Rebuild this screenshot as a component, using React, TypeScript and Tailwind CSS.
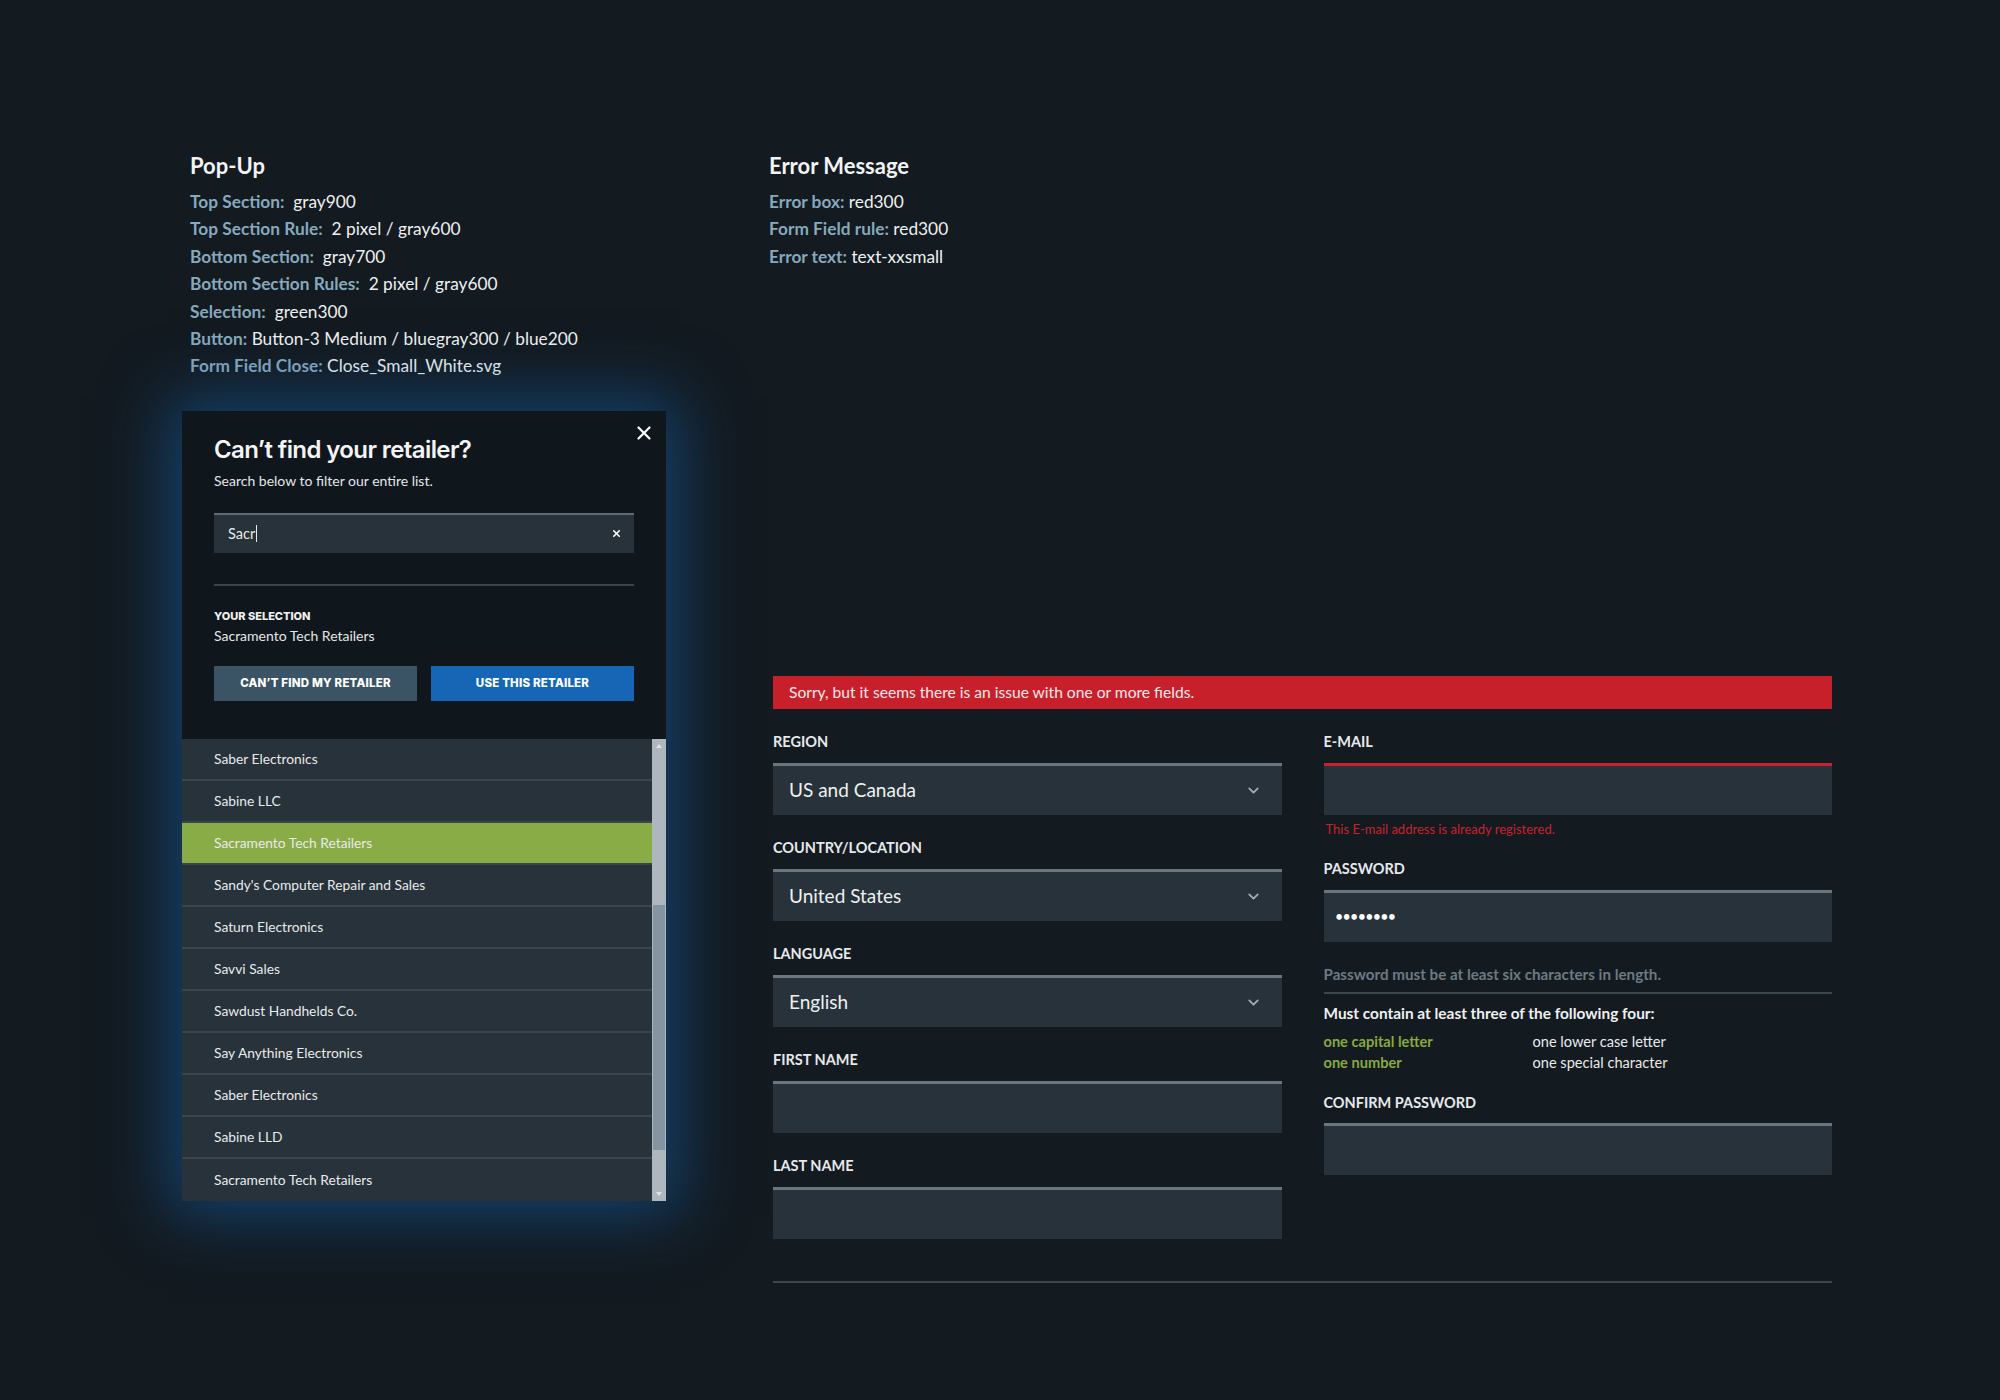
import React from 'react';
import { X, ChevronDown } from 'lucide-react';

const specs = [
  ['Top Section:', 'gray900', true],
  ['Top Section Rule:', '2 pixel / gray600', true],
  ['Bottom Section:', 'gray700', true],
  ['Bottom Section Rules:', '2 pixel / gray600', true],
  ['Selection:', 'green300', true],
  ['Button:', 'Button-3 Medium / bluegray300 / blue200', false],
  ['Form Field Close:', 'Close_Small_White.svg', false],
] as const;

const errorSpecs = [
  ['Error box:', 'red300'],
  ['Form Field rule:', 'red300'],
  ['Error text:', 'text-xxsmall'],
];

const retailers = [
  'Saber Electronics',
  'Sabine LLC',
  'Sacramento Tech Retailers',
  "Sandy's Computer Repair and Sales",
  'Saturn Electronics',
  'Savvi Sales',
  'Sawdust Handhelds Co.',
  'Say Anything Electronics',
  'Saber Electronics',
  'Sabine LLD',
  'Sacramento Tech Retailers',
];

function SpecList({ title, items }: { title: string; items: readonly (readonly [string, string, ...unknown[]])[] }) {
  return (
    <div>
      <h2 className="text-[22px] leading-[28px] font-bold text-[#f1f3f4]">{title}</h2>
      <ul className="mt-[8px]">
        {items.map(([label, value, gap]) => (
          <li key={label} className="text-[17.3px] leading-[27.4px] text-[#eef0f1]">
            <span className="font-bold text-[#86a9be]">{label}</span>
            {gap ? '\u00a0 ' : ' '}
            {value}
          </li>
        ))}
      </ul>
    </div>
  );
}

function Popup() {
  return (
    <div className="relative mt-[31px] -ml-[8px] w-[484px] shadow-[0_0_60px_14px_rgba(22,92,158,0.6)]">
      <div className="bg-[#10171c] px-[32px] pt-[24px] pb-[38px]" style={{ fontFamily: 'Inter, "Noto Sans", sans-serif' }}>
        <button className="absolute top-[11px] right-[11px] text-white">
          <X size={22} strokeWidth={2.4} />
        </button>
        <h3 className="text-[24px] leading-[30px] font-semibold tracking-[-0.6px] text-[#f3f4f5]">Can’t find your retailer?</h3>
        <p className="mt-[7px] text-[14px] leading-[18px] text-[#e3e6e8]" style={{ fontFamily: 'Lato, sans-serif' }}>
          Search below to filter our entire list.
        </p>
        <div className="mt-[23px] h-[40px] bg-[#27323a] border-t-2 border-[#5d6a73] flex items-center justify-between pl-[14px] pr-[12px]">
          <span className="flex items-center text-[14.5px] text-[#e8eaeb]" style={{ fontFamily: 'Lato, sans-serif' }}>
            Sacr<span className="ml-[1px] inline-block w-px h-[17px] bg-[#e8eaeb]" />
          </span>
          <X size={11} strokeWidth={3.5} className="text-white" />
        </div>
        <div className="mt-[31px] h-[2px] bg-[#38444c]" />
        <div className="mt-[23px] text-[11px] leading-[14px] font-extrabold uppercase text-[#eef0f1]">Your Selection</div>
        <div className="mt-[4px] text-[14px] leading-[18px] text-[#e3e6e8]" style={{ fontFamily: 'Lato, sans-serif' }}>
          Sacramento Tech Retailers
        </div>
        <div className="mt-[21px] grid grid-cols-2 gap-[14px]">
          <button className="h-[35px] bg-[#3a5365] text-white text-[11.5px] font-extrabold uppercase tracking-[0.2px]">Can’t find my retailer</button>
          <button className="h-[35px] bg-[#1766b5] text-white text-[11.5px] font-extrabold uppercase tracking-[0.2px]">Use this retailer</button>
        </div>
      </div>
      <div className="flex bg-[#27323a]" style={{ fontFamily: 'Lato, sans-serif' }}>
        <ul className="flex-1">
          {retailers.map((r, i) => (
            <li
              key={i}
              className={`h-[42px] flex items-center pl-[32px] text-[13.8px] text-[#e8eaeb] ${i < retailers.length - 1 ? 'border-b-2 border-[#3a464e]' : ''} ${i === 2 ? 'bg-[#8aac46]' : ''}`}
            >
              {r}
            </li>
          ))}
        </ul>
        <div className="w-[14px] flex flex-col bg-[#aeb7be]">
          <div className="h-[14px] flex items-center justify-center">
            <div className="w-0 h-0 border-l-[3px] border-r-[3px] border-b-[4px] border-l-transparent border-r-transparent border-b-[#dfe3e6]" />
          </div>
          <div className="h-[152px]" />
          <div className="h-[245px] mx-[1px] bg-[#8494a0]" />
          <div className="flex-1" />
          <div className="h-[14px] flex items-center justify-center">
            <div className="w-0 h-0 border-l-[3px] border-r-[3px] border-t-[4px] border-l-transparent border-r-transparent border-t-[#dfe3e6]" />
          </div>
        </div>
      </div>
    </div>
  );
}

function Label({ children }: { children: React.ReactNode }) {
  return <div className="text-[14.5px] leading-[18px] font-bold uppercase text-[#e6e9eb]">{children}</div>;
}

function Field({ label, value, select, error }: { label: string; value?: string; select?: boolean; error?: boolean }) {
  return (
    <div>
      <Label>{label}</Label>
      <div
        className={`mt-[12px] h-[52px] bg-[#27323a] border-t-[3px] flex items-center justify-between pl-[16px] pr-[20px] ${error ? 'border-[#c8232c]' : 'border-[#6a767e]'}`}
      >
        <span className="text-[19px] text-[#eef0f1]">{value}</span>
        {select && <ChevronDown size={17} strokeWidth={2.6} className="text-[#a3acb2]" />}
      </div>
    </div>
  );
}

function ErrorForm() {
  return (
    <div className="mt-[406px] ml-[4px] w-[1059px]">
      <div className="h-[33px] bg-[#c8202a] flex items-center pl-[16px] text-[15.6px] text-[#f6e9ea]">
        Sorry, but it seems there is an issue with one or more fields.
      </div>
      <div className="mt-[24px] grid grid-cols-2 gap-x-[42px] items-start">
        <div className="flex flex-col gap-[24px]">
          <Field label="Region" value="US and Canada" select />
          <Field label="Country/Location" value="United States" select />
          <Field label="Language" value="English" select />
          <Field label="First Name" />
          <Field label="Last Name" />
        </div>
        <div>
          <Field label="E-mail" error />
          <div className="mt-[6px] pl-[2px] text-[13px] leading-[16px] text-[#c8232c]">This E-mail address is already registered.</div>
          <div className="mt-[23px]">
            <Label>Password</Label>
            <div className="mt-[12px] h-[52px] bg-[#27323a] border-t-[3px] border-[#6a767e] flex items-center pl-[12px]">
              <span className="text-[12.5px] font-bold tracking-[0.3px] text-white">••••••••</span>
            </div>
          </div>
          <div className="mt-[23px] text-[15.2px] leading-[18px] font-bold text-[#6d7a84]">Password must be at least six characters in length.</div>
          <div className="mt-[9px] h-[2px] bg-[#3b474f]" />
          <div className="mt-[10px] text-[15.4px] leading-[18px] font-bold text-[#eef0f1]">Must contain at least three of the following four:</div>
          <div className="mt-[9px] grid grid-cols-[209px_1fr] text-[14.6px] leading-[21px]">
            <span className="font-bold text-[#88a93e]">one capital letter</span>
            <span className="text-[#e8eaeb]">one lower case letter</span>
            <span className="font-bold text-[#88a93e]">one number</span>
            <span className="text-[#e8eaeb]">one special character</span>
          </div>
          <div className="mt-[21px]">
            <Label>Confirm Password</Label>
            <div className="mt-[11px] h-[52px] bg-[#27323a] border-t-[3px] border-[#6a767e]" />
          </div>
        </div>
      </div>
      <div className="mt-[42px] h-[2px] bg-[#3b474f]" />
    </div>
  );
}

export default function App() {
  return (
    <div
      className="w-[2000px] h-[1400px] bg-[#131a20] overflow-hidden"
      style={{ fontFamily: 'Lato, "Noto Sans", sans-serif' }}
    >
      <div className="flex pt-[152px] pl-[190px] gap-[98px]">
        <div className="w-[481px]">
          <SpecList title="Pop-Up" items={specs} />
          <Popup />
        </div>
        <div>
          <SpecList title="Error Message" items={errorSpecs.map(([a, b]) => [a, b, false] as const)} />
          <ErrorForm />
        </div>
      </div>
    </div>
  );
}
